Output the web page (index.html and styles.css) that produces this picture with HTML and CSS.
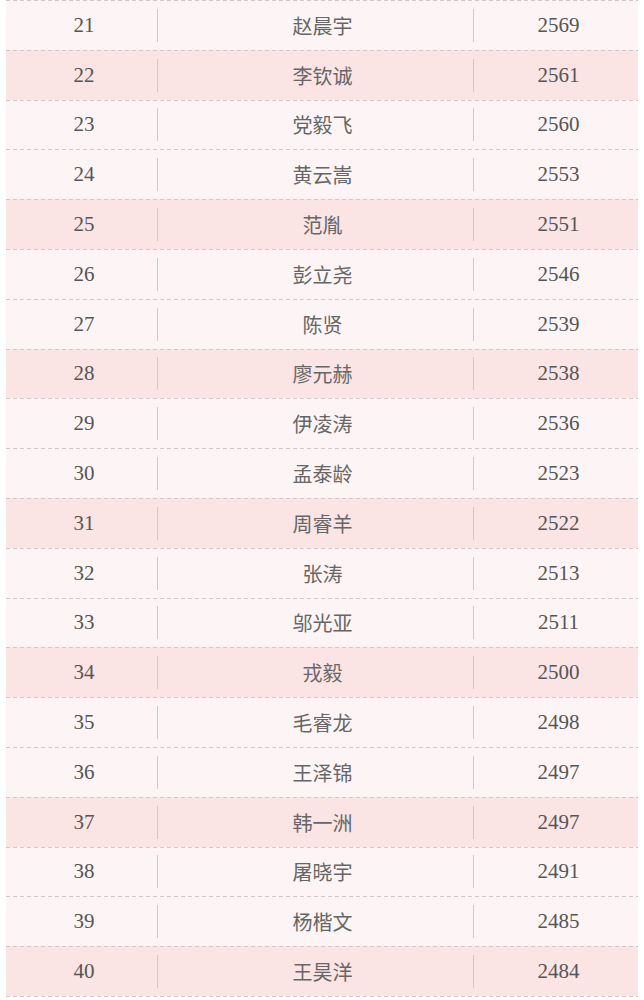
FILE: index.html
```html
<!DOCTYPE html>
<html lang="zh">
<head>
<meta charset="utf-8">
<link rel="stylesheet" href="styles.css">
</head>
<body>
<div class="table">
  <div class="row"><div class="c rank">21</div><div class="c name">赵晨宇</div><div class="c score">2569</div></div>
  <div class="row hl"><div class="c rank">22</div><div class="c name">李钦诚</div><div class="c score">2561</div></div>
  <div class="row"><div class="c rank">23</div><div class="c name">党毅飞</div><div class="c score">2560</div></div>
  <div class="row"><div class="c rank">24</div><div class="c name">黄云嵩</div><div class="c score">2553</div></div>
  <div class="row hl"><div class="c rank">25</div><div class="c name">范胤</div><div class="c score">2551</div></div>
  <div class="row"><div class="c rank">26</div><div class="c name">彭立尧</div><div class="c score">2546</div></div>
  <div class="row"><div class="c rank">27</div><div class="c name">陈贤</div><div class="c score">2539</div></div>
  <div class="row hl"><div class="c rank">28</div><div class="c name">廖元赫</div><div class="c score">2538</div></div>
  <div class="row"><div class="c rank">29</div><div class="c name">伊凌涛</div><div class="c score">2536</div></div>
  <div class="row"><div class="c rank">30</div><div class="c name">孟泰龄</div><div class="c score">2523</div></div>
  <div class="row hl"><div class="c rank">31</div><div class="c name">周睿羊</div><div class="c score">2522</div></div>
  <div class="row"><div class="c rank">32</div><div class="c name">张涛</div><div class="c score">2513</div></div>
  <div class="row"><div class="c rank">33</div><div class="c name">邬光亚</div><div class="c score">2511</div></div>
  <div class="row hl"><div class="c rank">34</div><div class="c name">戎毅</div><div class="c score">2500</div></div>
  <div class="row"><div class="c rank">35</div><div class="c name">毛睿龙</div><div class="c score">2498</div></div>
  <div class="row"><div class="c rank">36</div><div class="c name">王泽锦</div><div class="c score">2497</div></div>
  <div class="row hl"><div class="c rank">37</div><div class="c name">韩一洲</div><div class="c score">2497</div></div>
  <div class="row"><div class="c rank">38</div><div class="c name">屠晓宇</div><div class="c score">2491</div></div>
  <div class="row"><div class="c rank">39</div><div class="c name">杨楷文</div><div class="c score">2485</div></div>
  <div class="row hl"><div class="c rank">40</div><div class="c name">王昊洋</div><div class="c score">2484</div></div>
</div>
</body>
</html>
```
FILE: styles.css
```css
html, body {
  margin: 0;
  padding: 0;
  background: #ffffff;
}
.table {
  margin: 0 6px;
  width: 632px;
  padding-bottom: 1px;
  background-image: repeating-linear-gradient(to right, #cfcaca 0 4px, transparent 4px 7px);
  background-size: 100% 1px;
  background-position: left bottom;
  background-repeat: no-repeat;
}
.row {
  display: grid;
  grid-template-columns: 151px 316px 165px;
  align-items: center;
  height: 49.8px;
  box-sizing: border-box;
  padding-top: 1px;
  background-color: #fdf5f5;
  background-image: repeating-linear-gradient(to right, #cfcaca 0 4px, transparent 4px 7px);
  background-size: 100% 1px;
  background-position: left top;
  background-repeat: no-repeat;
}
.row.hl {
  background-color: #fbe4e4;
}
.c {
  display: flex;
  align-items: center;
  justify-content: center;
  height: 33px;
  box-sizing: border-box;
  color: #555;
}
.rank, .score {
  font-family: "Liberation Serif", "Noto Sans CJK SC", serif;
  font-size: 21px;
  padding-left: 5px;
}
.name {
  font-family: "Noto Sans CJK SC", sans-serif;
  font-size: 20px;
  color: #666;
  padding-left: 14px;
  border-left: 1px solid #cfcaca;
}
.score {
  border-left: 1px solid #cfcaca;
}
```
